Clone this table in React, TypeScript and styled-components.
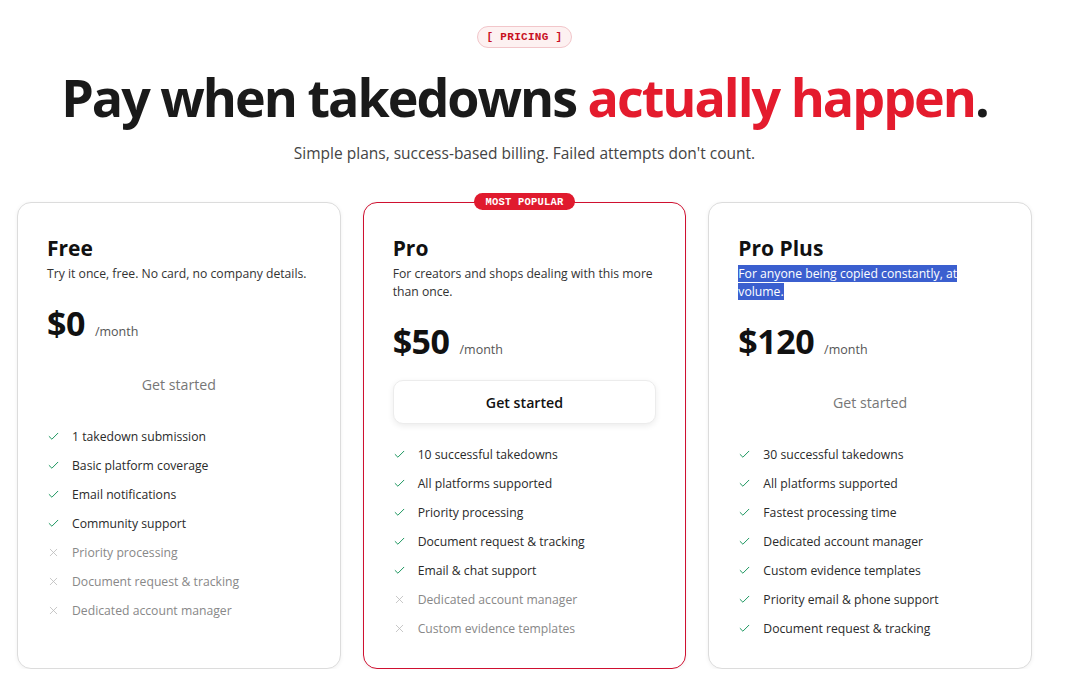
import React from "react";
import styled, { createGlobalStyle } from "styled-components";
import { Check, X } from "lucide-react";

const Global = createGlobalStyle`
  html, body { margin: 0; padding: 0; background: #fff; }
  body { font-family: "Open Sans", "Noto Sans", sans-serif; color: #1a1a1a; }
  * { box-sizing: border-box; }
`;

const Page = styled.div`
  width: 1049px;
  padding: 26px 17px 0;
  display: flex;
  flex-direction: column;
  align-items: center;
`;

const Tag = styled.div`
  height: 22px;
  padding: 0 9px;
  border-radius: 11px;
  background: #fdf1f1;
  border: 1px solid #f2c6ca;
  color: #c8101f;
  font-family: "Liberation Mono", "DejaVu Sans Mono", monospace;
  font-weight: 700;
  font-size: 11px;
  letter-spacing: 0.3px;
  display: flex;
  align-items: center;
  white-space: pre;
`;

const Title = styled.h1`
  margin: 14px 0 0;
  font-size: 52px;
  line-height: 70px;
  font-weight: 700;
  letter-spacing: -2px;
  color: #1a1a1a;
  white-space: nowrap;
`;

const Accent = styled.span`
  color: #e41b2d;
`;

const Subtitle = styled.p`
  margin: 9px 0 0;
  font-size: 15.5px;
  line-height: 24px;
  color: #444;
`;

const Grid = styled.div`
  margin-top: 37px;
  width: 100%;
  display: grid;
  grid-template-columns: repeat(3, 1fr);
  gap: 22px;
`;

const Card = styled.div<{ $featured?: boolean }>`
  position: relative;
  border-radius: 14px;
  border: 1px solid ${(p) => (p.$featured ? "#cf1030" : "#dcdcdc")};
  background: #fff;
  box-shadow: 0 1px 4px rgba(0, 0, 0, 0.06);
  padding: 31px 29px 25px;
  display: flex;
  flex-direction: column;
`;

const Badge = styled.div`
  position: absolute;
  top: -10px;
  left: 50%;
  transform: translateX(-50%);
  height: 17px;
  padding: 0 11px;
  border-radius: 9px;
  background: #e01a2e;
  color: #fff;
  font-family: "Liberation Mono", "DejaVu Sans Mono", monospace;
  font-weight: 700;
  font-size: 10.5px;
  letter-spacing: 0.2px;
  display: flex;
  align-items: center;
  white-space: nowrap;
`;

const Name = styled.h2`
  margin: 0;
  font-size: 21px;
  line-height: 28px;
  font-weight: 700;
  color: #111;
`;

const Desc = styled.p`
  margin: 3px 0 0;
  font-size: 12.2px;
  line-height: 18px;
  color: #333;
  white-space: pre-line;
`;

const Selected = styled.span`
  background: #3b5fcf;
  color: #fff;
`;

const PriceRow = styled.div`
  margin-top: 20px;
  height: 40px;
  display: flex;
  align-items: baseline;
`;

const Amount = styled.span`
  font-size: 34px;
  line-height: 40px;
  font-weight: 700;
  color: #111;
  letter-spacing: -0.5px;
`;

const Per = styled.span`
  margin-left: 10px;
  font-size: 12.5px;
  color: #555;
`;

const Button = styled.button<{ $primary?: boolean }>`
  margin-top: 19px;
  height: 44px;
  width: 100%;
  border-radius: 10px;
  font-family: inherit;
  font-size: 14.2px;
  font-weight: ${(p) => (p.$primary ? 600 : 500)};
  color: ${(p) => (p.$primary ? "#111" : "#777")};
  background: #fff;
  border: 1px solid ${(p) => (p.$primary ? "#ececec" : "transparent")};
  box-shadow: ${(p) => (p.$primary ? "0 2px 6px rgba(0,0,0,0.08)" : "none")};
  cursor: pointer;
`;

const List = styled.ul`
  margin: 16px 0 0;
  padding: 0;
  list-style: none;
`;

const Item = styled.li<{ $off?: boolean }>`
  height: 29px;
  display: flex;
  align-items: center;
  gap: 12px;
  font-size: 12.2px;
  color: ${(p) => (p.$off ? "#888" : "#2a2a2a")};
  svg { flex: none; color: ${(p) => (p.$off ? "#bbb" : "#17945a")}; }
`;

type Feature = [string, boolean];
type Plan = {
  name: string;
  desc: React.ReactNode;
  price: string;
  featured?: boolean;
  features: Feature[];
};

const plans: Plan[] = [
  {
    name: "Free",
    desc: "Try it once, free. No card, no company details.",
    price: "$0",
    features: [
      ["1 takedown submission", true],
      ["Basic platform coverage", true],
      ["Email notifications", true],
      ["Community support", true],
      ["Priority processing", false],
      ["Document request & tracking", false],
      ["Dedicated account manager", false],
    ],
  },
  {
    name: "Pro",
    desc: "For creators and shops dealing with this more\nthan once.",
    price: "$50",
    featured: true,
    features: [
      ["10 successful takedowns", true],
      ["All platforms supported", true],
      ["Priority processing", true],
      ["Document request & tracking", true],
      ["Email & chat support", true],
      ["Dedicated account manager", false],
      ["Custom evidence templates", false],
    ],
  },
  {
    name: "Pro Plus",
    desc: <Selected>{"For anyone being copied constantly, at\nvolume."}</Selected>,
    price: "$120",
    features: [
      ["30 successful takedowns", true],
      ["All platforms supported", true],
      ["Fastest processing time", true],
      ["Dedicated account manager", true],
      ["Custom evidence templates", true],
      ["Priority email & phone support", true],
      ["Document request & tracking", true],
    ],
  },
];

export default function App() {
  return (
    <>
      <Global />
      <Page>
        <Tag>[ PRICING ]</Tag>
        <Title>
          Pay when takedowns <Accent>actually happen</Accent>.
        </Title>
        <Subtitle>Simple plans, success-based billing. Failed attempts don't count.</Subtitle>
        <Grid>
          {plans.map((p) => (
            <Card key={p.name} $featured={p.featured}>
              {p.featured && <Badge>MOST POPULAR</Badge>}
              <Name>{p.name}</Name>
              <Desc>{p.desc}</Desc>
              <PriceRow>
                <Amount>{p.price}</Amount>
                <Per>/month</Per>
              </PriceRow>
              <Button $primary={p.featured}>Get started</Button>
              <List>
                {p.features.map(([f, on]) => (
                  <Item key={f} $off={!on}>
                    {on ? <Check size={13} strokeWidth={1.8} /> : <X size={13} strokeWidth={1.5} />}
                    {f}
                  </Item>
                ))}
              </List>
            </Card>
          ))}
        </Grid>
      </Page>
    </>
  );
}
